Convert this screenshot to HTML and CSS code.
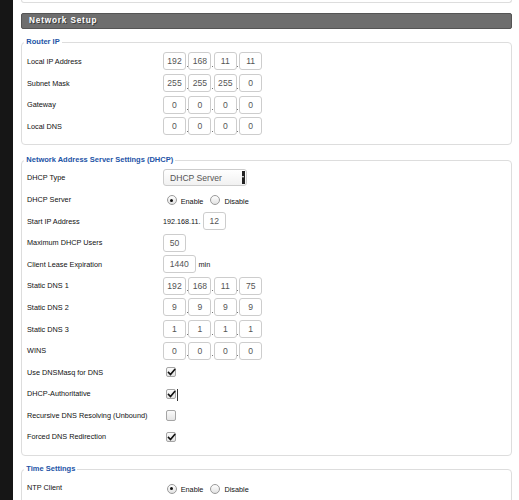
FILE: index.html
```html
<!DOCTYPE html>
<html>
<head>
<meta charset="utf-8">
<link rel="stylesheet" href="styles.css">
</head>
<body>
<div class="page">
  <div class="sidebar"></div>
  <div class="main">
    <div class="topbox"></div>
    <div class="header">Network Setup</div>

    <fieldset class="group g-router">
      <legend>Router IP</legend>
      <div class="row"><span class="label">Local IP Address</span>
        <div class="ip"><input class="oct" value="192"><span class="dot"></span><input class="oct" value="168"><span class="dot"></span><input class="oct" value="11"><span class="dot"></span><input class="oct" value="11"></div></div>
      <div class="row"><span class="label">Subnet Mask</span>
        <div class="ip"><input class="oct" value="255"><span class="dot"></span><input class="oct" value="255"><span class="dot"></span><input class="oct" value="255"><span class="dot"></span><input class="oct" value="0"></div></div>
      <div class="row"><span class="label">Gateway</span>
        <div class="ip"><input class="oct" value="0"><span class="dot"></span><input class="oct" value="0"><span class="dot"></span><input class="oct" value="0"><span class="dot"></span><input class="oct" value="0"></div></div>
      <div class="row"><span class="label">Local DNS</span>
        <div class="ip"><input class="oct" value="0"><span class="dot"></span><input class="oct" value="0"><span class="dot"></span><input class="oct" value="0"><span class="dot"></span><input class="oct" value="0"></div></div>
    </fieldset>

    <fieldset class="group g-dhcp">
      <legend>Network Address Server Settings (DHCP)</legend>
      <div class="row"><span class="label">DHCP Type</span>
        <div class="select"><span class="sel-text">DHCP Server</span><span class="sel-arrow"></span></div></div>
      <div class="row"><span class="label">DHCP Server</span>
        <div class="radios"><span class="radio on"></span><span class="rtext">Enable</span><span class="radio"></span><span class="rtext">Disable</span></div></div>
      <div class="row"><span class="label">Start IP Address</span>
        <span class="prefix">192.168.11.</span><input class="oct start" value="12"></div>
      <div class="row"><span class="label">Maximum DHCP Users</span>
        <input class="oct" value="50"></div>
      <div class="row"><span class="label">Client Lease Expiration</span>
        <input class="oct wide" value="1440"><span class="unit">min</span></div>
      <div class="row"><span class="label">Static DNS 1</span>
        <div class="ip"><input class="oct" value="192"><span class="dot"></span><input class="oct" value="168"><span class="dot"></span><input class="oct" value="11"><span class="dot"></span><input class="oct" value="75"></div></div>
      <div class="row"><span class="label">Static DNS 2</span>
        <div class="ip"><input class="oct" value="9"><span class="dot"></span><input class="oct" value="9"><span class="dot"></span><input class="oct" value="9"><span class="dot"></span><input class="oct" value="9"></div></div>
      <div class="row"><span class="label">Static DNS 3</span>
        <div class="ip"><input class="oct" value="1"><span class="dot"></span><input class="oct" value="1"><span class="dot"></span><input class="oct" value="1"><span class="dot"></span><input class="oct" value="1"></div></div>
      <div class="row"><span class="label">WINS</span>
        <div class="ip"><input class="oct" value="0"><span class="dot"></span><input class="oct" value="0"><span class="dot"></span><input class="oct" value="0"><span class="dot"></span><input class="oct" value="0"></div></div>
      <div class="row"><span class="label">Use DNSMasq for DNS</span>
        <span class="check on"><svg viewBox="0 0 12 12" class="tick"><path d="M2.8 6 L4.9 8.1 L9.4 2.8"/></svg></span></div>
      <div class="row"><span class="label">DHCP-Authoritative</span>
        <span class="check on"><svg viewBox="0 0 12 12" class="tick"><path d="M2.8 6 L4.9 8.1 L9.4 2.8"/></svg><span class="cursor"></span></span></div>
      <div class="row"><span class="label">Recursive DNS Resolving (Unbound)</span>
        <span class="check"></span></div>
      <div class="row"><span class="label">Forced DNS Redirection</span>
        <span class="check on"><svg viewBox="0 0 12 12" class="tick"><path d="M2.8 6 L4.9 8.1 L9.4 2.8"/></svg></span></div>
    </fieldset>

    <fieldset class="group g-time">
      <legend>Time Settings</legend>
      <div class="row"><span class="label">NTP Client</span>
        <div class="radios"><span class="radio on"></span><span class="rtext">Enable</span><span class="radio"></span><span class="rtext">Disable</span></div></div>
    </fieldset>
  </div>
</div>
</body>
</html>
```
FILE: styles.css
```css
html, body {
  margin: 0;
  padding: 0;
  background: #fff;
  overflow: hidden;
}
body {
  font-family: "Liberation Sans", Arial, sans-serif;
  color: #222;
}
.page {
  display: flex;
  min-height: 500px;
}
.sidebar {
  width: 13px;
  flex: none;
  background: #161616;
}
.main {
  flex: 1;
  padding: 0 7px 0 8px;
}
.topbox {
  height: 3px;
  border: 1px solid #ddd;
  border-top: none;
  border-radius: 0 0 4px 4px;
  box-sizing: border-box;
}
.header {
  margin-top: 10px;
  height: 16px;
  box-sizing: border-box;
  border: 1px solid #555;
  border-radius: 2px;
  background: #6e6e6e;
  color: #fff;
  font-weight: bold;
  font-size: 8.2px;
  letter-spacing: 0.85px;
  line-height: 14px;
  padding-left: 7px;
  text-shadow: 1px 1px 0 #3a3a3a;
}
.group {
  margin: 8px 0 0 0;
  border: 1px solid #ddd;
  border-radius: 4px;
  padding: 3.5px 5px 7px 5px;
  min-width: 0;
}
.g-dhcp { margin-top: 10px; padding-top: 1.8px; padding-bottom: 7.5px; }
.g-time { margin-top: 8px; padding-top: 2.8px; }
.group legend {
  font-size: 7.5px;
  font-weight: bold;
  color: #2253a6;
  line-height: 10px;
  padding: 0 2px;
  margin-left: -2.7px;
}
.row {
  display: flex;
  align-items: center;
  height: 21.7px;
}
.g-dhcp .row { height: 21.6px; }
.label {
  width: 136px;
  flex: none;
  font-size: 7.3px;
  color: #111;
}
.ip {
  display: flex;
  align-items: center;
}
.oct {
  width: 23px;
  height: 18px;
  box-sizing: border-box;
  border: 1px solid #cdcdcd;
  border-radius: 3px;
  background: #fff;
  font-family: "Liberation Sans", Arial, sans-serif;
  font-size: 8.6px;
  color: #555;
  text-align: center;
  padding: 0;
  margin: 0;
  outline: none;
}
.oct.wide { width: 32.5px; }
.oct.start { margin-left: 2.3px; }
.dot {
  display: inline-block;
  width: 2.4px;
  height: 18px;
  position: relative;
}
.dot::after {
  content: "";
  position: absolute;
  left: 0.7px;
  bottom: 3.5px;
  width: 1px;
  height: 1px;
  background: #777;
}
.prefix {
  font-size: 7.2px;
  color: #111;
}
.unit {
  font-size: 7.3px;
  margin-left: 3px;
  color: #111;
}
.select {
  width: 83.5px;
  height: 17px;
  box-sizing: border-box;
  border: 1px solid #ccc;
  border-radius: 3px;
  background: linear-gradient(#fff, #f1f1f1);
  display: flex;
  align-items: center;
  justify-content: space-between;
  padding: 0 1px 0 6px;
  font-size: 8.6px;
  color: #555;
}
.sel-arrow {
  width: 3px;
  height: 13px;
  background: #222;
  position: relative;
}
.sel-arrow::after {
  content: "";
  position: absolute;
  left: 0.5px;
  top: 5px;
  border-left: 1px solid transparent;
  border-right: 1px solid transparent;
  border-top: 2px solid #fff;
}
.radios {
  display: flex;
  align-items: center;
  margin-top: 2px;
  margin-left: 3.7px;
}
.radio {
  width: 10px;
  height: 10px;
  box-sizing: border-box;
  border: 1px solid #9a9a9a;
  border-radius: 50%;
  background: linear-gradient(#fff, #e2e2e2);
  position: relative;
  flex: none;
}
.radio.on::after {
  content: "";
  position: absolute;
  left: 2.5px;
  top: 2.5px;
  width: 3px;
  height: 3px;
  border-radius: 50%;
  background: #111;
}
.rtext {
  font-size: 7.3px;
  margin: 2px 7px 0 4px;
  color: #111;
}
.check {
  width: 10.5px;
  height: 10.5px;
  box-sizing: border-box;
  border: 1px solid #a5a5a5;
  border-radius: 2px;
  background: linear-gradient(#fbfbfb, #e4e4e4);
  margin-left: 2.7px;
  position: relative;
  flex: none;
}
.tick {
  position: absolute;
  left: -0.8px;
  top: -0.8px;
  width: 11px;
  height: 11px;
  overflow: visible;
}
.tick path {
  fill: none;
  stroke: #111;
  stroke-width: 1.8;
  stroke-linecap: square;
  stroke-linejoin: miter;
}
.cursor {
  position: absolute;
  left: 10.5px;
  top: -1px;
  width: 1px;
  height: 12px;
  background: #333;
}
```
